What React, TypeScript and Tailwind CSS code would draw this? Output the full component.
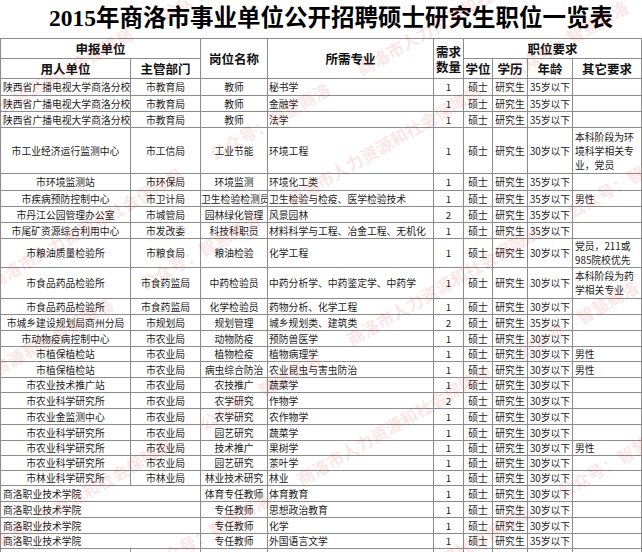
type Row = {
  unit: string;
  dept?: string;
  post: string;
  major: string;
  num: string;
  age: string;
  other?: string[];
  h: string;
  left?: boolean;
  span?: boolean;
};

const SX = "陕西省广播电视大学商洛分校";
const NY = "市农业局";
const ZY = "商洛职业技术学院";

const rows: Row[] = [
  { unit: SX, dept: "市教育局", post: "教师", major: "秘书学", num: "1", age: "35岁以下", h: "h-[17px]", left: true },
  { unit: SX, dept: "市教育局", post: "教师", major: "金融学", num: "1", age: "35岁以下", h: "h-[16px]", left: true },
  { unit: SX, dept: "市教育局", post: "教师", major: "法学", num: "1", age: "35岁以下", h: "h-[16px]", left: true },
  {
    unit: "市工业经济运行监测中心", dept: "市工信局", post: "工业节能", major: "环境工程", num: "1", age: "30岁以下",
    other: ["本科阶段为环", "境科学相关专", "业，党员"], h: "h-[46px]",
  },
  { unit: "市环境监测站", dept: "市环保局", post: "环境监测", major: "环境化工类", num: "1", age: "35岁以下", h: "h-[17px]" },
  {
    unit: "市疾病预防控制中心", dept: "市卫计局", post: "卫生检验检测员", major: "卫生检验与检疫、医学检验技术", num: "1",
    age: "35岁以下", other: ["男性"], h: "h-[16px]",
  },
  { unit: "市丹江公园管理办公室", dept: "市城管局", post: "园林绿化管理", major: "风景园林", num: "2", age: "35岁以下", h: "h-[16px]" },
  {
    unit: "市尾矿资源综合利用中心", dept: "市发改委", post: "科技科职员", major: "材料科学与工程、冶金工程、无机化", num: "1",
    age: "35岁以下", h: "h-[16px]",
  },
  {
    unit: "市粮油质量检验所", dept: "市粮食局", post: "粮油检验", major: "化学工程", num: "1", age: "30岁以下",
    other: ["党员，211或", "985院校优先"], h: "h-[29px]",
  },
  {
    unit: "市食品药品检验所", dept: "市食药监局", post: "中药检验员", major: "中药分析学、中药鉴定学、中药学", num: "1",
    age: "30岁以下", other: ["本科阶段为药", "学相关专业"], h: "h-[31px]",
  },
  { unit: "市食品药品检验所", dept: "市食药监局", post: "化学检验员", major: "药物分析、化学工程", num: "1", age: "30岁以下", h: "h-[16px]" },
  { unit: "市城乡建设规划局商州分局", dept: "市规划局", post: "规划管理", major: "城乡规划类、建筑类", num: "2", age: "35岁以下", h: "h-[16px]" },
  { unit: "市动物疫病控制中心", dept: NY, post: "动物防疫", major: "预防兽医学", num: "1", age: "30岁以下", h: "h-[16px]" },
  { unit: "市植保植检站", dept: NY, post: "植物检疫", major: "植物病理学", num: "1", age: "30岁以下", other: ["男性"], h: "h-[15px]" },
  { unit: "市植保植检站", dept: NY, post: "病虫综合防治", major: "农业昆虫与害虫防治", num: "1", age: "30岁以下", other: ["男性"], h: "h-[16px]" },
  { unit: "市农业技术推广站", dept: NY, post: "农技推广", major: "蔬菜学", num: "1", age: "30岁以下", h: "h-[15px]" },
  { unit: "市农业科学研究所", dept: NY, post: "农学研究", major: "作物学", num: "2", age: "30岁以下", h: "h-[16px]" },
  { unit: "市农业金监测中心", dept: NY, post: "农学研究", major: "农作物学", num: "1", age: "30岁以下", h: "h-[16px]" },
  { unit: "市农业科学研究所", dept: NY, post: "园艺研究", major: "蔬菜学", num: "1", age: "30岁以下", h: "h-[16px]" },
  { unit: "市农业科学研究所", dept: NY, post: "技术推广", major: "果树学", num: "1", age: "30岁以下", other: ["男性"], h: "h-[15px]" },
  { unit: "市农业科学研究所", dept: NY, post: "园艺研究", major: "茶叶学", num: "1", age: "30岁以下", h: "h-[15px]" },
  { unit: "市林业科学研究所", dept: "市林业局", post: "林业技术研究", major: "林业", num: "1", age: "30岁以下", h: "h-[15px]" },
  { unit: ZY, post: "体育专任教师", major: "体育教育", num: "1", age: "30岁以下", h: "h-[16px]", left: true, span: true },
  { unit: ZY, post: "专任教师", major: "思想政治教育", num: "1", age: "30岁以下", h: "h-[16px]", left: true, span: true },
  { unit: ZY, post: "专任教师", major: "化学", num: "1", age: "30岁以下", h: "h-[16px]", left: true, span: true },
  { unit: ZY, post: "专任教师", major: "外国语言文学", num: "1", age: "35岁以下", h: "h-[15px]", left: true, span: true },
];

const td = "border border-[#8c8c8c] p-0 align-middle whitespace-nowrap overflow-hidden";
const th = "border border-[#8c8c8c] p-0 align-middle text-center font-bold text-[12.5px] leading-[15px] text-[#111]";

const mark = "商洛市人力资源和社会保障局　　公众号：智慧商洛　　商洛市人力资源和社会保障局　　公众号：智慧商洛";

export default function App() {
  return (
    <div
      className="relative w-[642px] h-[552px] overflow-hidden bg-white text-[#1a1a1a]"
      style={{ fontFamily: '"Noto Sans CJK SC", "Liberation Sans", sans-serif' }}
    >
      <div className="h-[38px] flex items-center justify-center pl-[20px]">
        <h1
          className="text-[23.5px] font-bold leading-none text-black"
          style={{ fontFamily: '"Liberation Serif", "Noto Sans CJK SC", serif' }}
        >
          2015年商洛市事业单位公开招聘硕士研究生职位一览表
        </h1>
      </div>

      <table className="table-fixed border-collapse w-[641px] text-[9.8px] leading-[12px]">
        <colgroup>
          <col className="w-[130px]" />
          <col className="w-[70px]" />
          <col className="w-[67px]" />
          <col className="w-[166px]" />
          <col className="w-[30px]" />
          <col className="w-[29px]" />
          <col className="w-[35px]" />
          <col className="w-[45px]" />
          <col className="w-[69px]" />
        </colgroup>
        <thead>
          <tr className="h-[20px]">
            <th colSpan={2} className={th}>申报单位</th>
            <th rowSpan={2} className={th}>岗位名称</th>
            <th rowSpan={2} className={th}>所需专业</th>
            <th rowSpan={2} className={th}>
              需求
              <br />
              数量
            </th>
            <th colSpan={4} className={th}>职位要求</th>
          </tr>
          <tr className="h-[20px]">
            <th className={th}>用人单位</th>
            <th className={th}>主管部门</th>
            <th className={th}>学位</th>
            <th className={th}>学历</th>
            <th className={th}>年龄</th>
            <th className={th}>其它要求</th>
          </tr>
        </thead>
        <tbody>
          {rows.map((r, i) => (
            <tr key={i} className={r.h}>
              {r.span ? (
                <td colSpan={2} className={`${td} text-left pl-[2px]`}>{r.unit}</td>
              ) : (
                <>
                  <td className={`${td} ${r.left ? "text-left pl-[2px]" : "text-center"}`}>{r.unit}</td>
                  <td className={`${td} text-center`}>{r.dept}</td>
                </>
              )}
              <td className={`${td} text-center`}>{r.post}</td>
              <td className={`${td} text-left pl-[1px]`}>{r.major}</td>
              <td className={`${td} text-center`}>{r.num}</td>
              <td className={`${td} text-center`}>硕士</td>
              <td className={`${td} text-center`}>研究生</td>
              <td className={`${td} text-center`}>{r.age}</td>
              <td className={`${td} text-left pl-[2px]`}>
                {r.other?.map((l, j) => (
                  <div key={j} className={r.other && r.other.length > 1 ? "leading-[14px]" : "leading-[12px]"}>
                    {l}
                  </div>
                ))}
              </td>
            </tr>
          ))}
          <tr className="h-[16px]">
            <td className={td}></td>
            <td className={td}></td>
            <td className={td}></td>
            <td className={td}></td>
            <td className={td}></td>
            <td className={td}></td>
            <td className={td}></td>
            <td className={td}></td>
            <td className={td}></td>
          </tr>
        </tbody>
      </table>

      {/* watermark */}
      <div className="pointer-events-none absolute inset-0 text-[17px] font-bold text-[rgba(225,40,40,0.13)] whitespace-nowrap">
        <span className="absolute left-[-60px] top-[130px] origin-left -rotate-[30deg]">{mark}</span>
        <span className="absolute left-[-10px] top-[270px] origin-left -rotate-[30deg]">{mark}</span>
        <span className="absolute left-[-80px] top-[400px] origin-left -rotate-[30deg]">{mark}</span>
        <span className="absolute left-[-20px] top-[540px] origin-left -rotate-[30deg]">{mark}</span>
        <span className="absolute left-[-70px] top-[680px] origin-left -rotate-[30deg]">{mark}</span>
        <span className="absolute left-[-30px] top-[820px] origin-left -rotate-[30deg]">{mark}</span>
      </div>
    </div>
  );
}
